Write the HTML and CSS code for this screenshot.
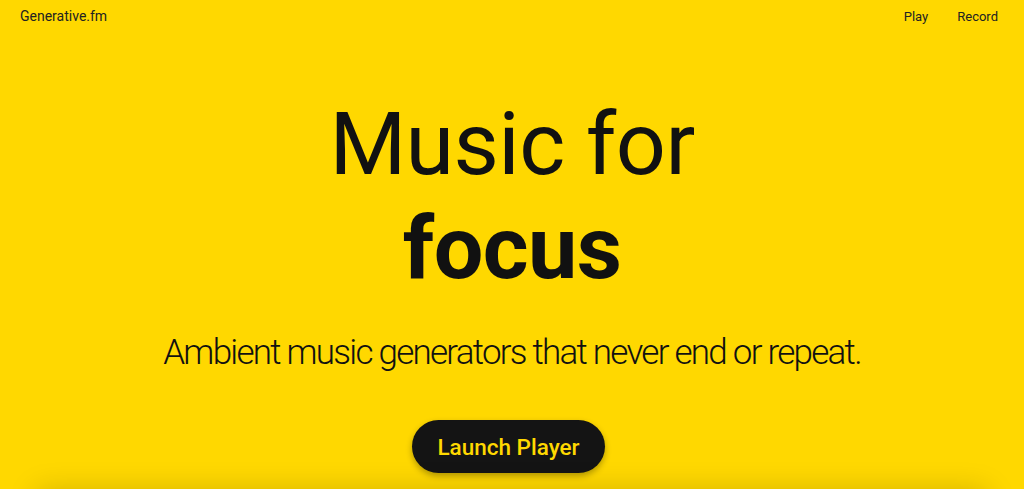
FILE: index.html
```html
<!DOCTYPE html>
<html>
<head>
<meta charset="utf-8">
<link rel="stylesheet" href="styles.css">
</head>
<body>
<header class="nav">
  <a class="brand" href="#">Generative.fm</a>
  <nav class="links">
    <a href="#">Play</a>
    <a href="#">Record</a>
  </nav>
</header>
<main class="hero">
  <h1 class="title">Music for<br><strong>focus</strong></h1>
  <p class="subtitle">Ambient music generators that never end or repeat.</p>
  <button class="cta">Launch Player</button>
  <div class="card"></div>
</main>
</body>
</html>
```
FILE: styles.css
```css
html, body {
  margin: 0;
  padding: 0;
  background: #ffd800;
  font-family: Roboto, "Liberation Sans", sans-serif;
  color: #111;
  overflow: hidden;
  height: 489px;
}
.nav {
  display: flex;
  justify-content: space-between;
  align-items: center;
  height: 32px;
  padding: 0 26px 0 20px;
}
.nav a {
  color: #222;
  text-decoration: none;
  font-size: 13px;
}
.nav .brand {
  font-size: 14px;
}
.links {
  display: flex;
  gap: 29px;
}
.hero {
  display: flex;
  flex-direction: column;
  align-items: center;
}
.title {
  margin: 60px 0 0;
  font-size: 88px;
  font-weight: 400;
  line-height: 104px;
  text-align: center;
  letter-spacing: -0.6px;
}
.title strong {
  font-weight: 700;
}
.subtitle {
  margin: 32px 0 0;
  font-size: 35px;
  font-weight: 300;
  letter-spacing: -1.75px;
}
.cta {
  margin-top: 47px;
  margin-right: 7px;
  background: #141414;
  color: #ffd800;
  border: none;
  border-radius: 27px;
  width: 193px;
  height: 53px;
  font-family: Roboto, "Liberation Sans", sans-serif;
  font-size: 22.5px;
  font-weight: 500;
  box-shadow: 0 3px 6px rgba(0,0,0,0.3);
}
.card {
  width: 950px;
  height: 200px;
  margin-top: 18px;
  box-shadow: 0 0 28px rgba(0,0,0,0.18);
}
```
